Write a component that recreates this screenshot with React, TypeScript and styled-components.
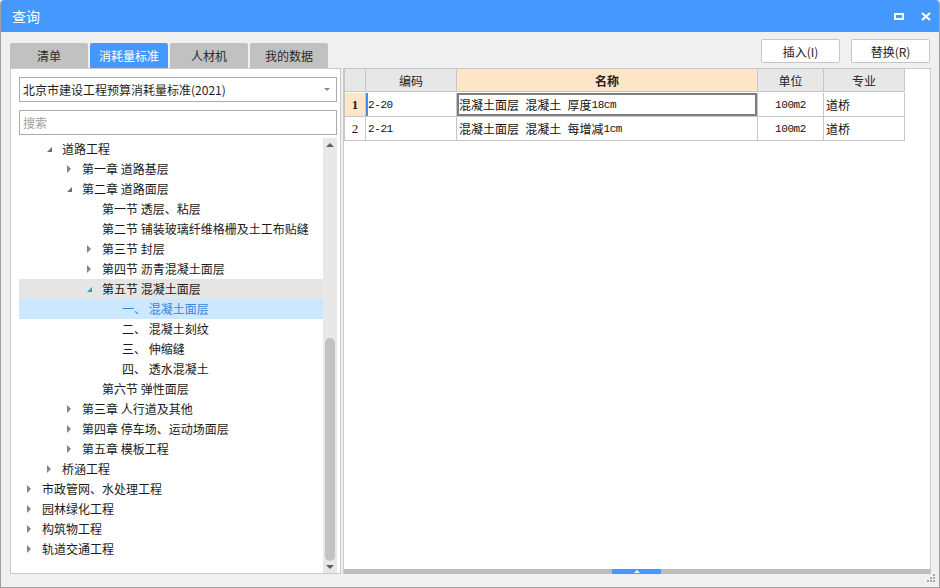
import styled, { createGlobalStyle } from "styled-components";

const GlobalStyle = createGlobalStyle`
  html, body {
    margin: 0;
    padding: 0;
    background: #ffffff;
  }
  body {
    font-family: "Noto Sans CJK SC", "Liberation Sans", sans-serif;
    font-size: 12px;
    color: #1e1e1e;
  }
  * {
    box-sizing: border-box;
  }
`;

const Window = styled.div`
  position: relative;
  width: 940px;
  height: 588px;
  display: flex;
  flex-direction: column;
  background: #f0f0f0;
  border: 1px solid #a2a2a2;
  border-top: none;
  border-radius: 4px 4px 0 0;
  overflow: hidden;
`;

const TitleBar = styled.div`
  height: 32px;
  flex: none;
  display: flex;
  align-items: center;
  justify-content: space-between;
  background: #4599fe;
  color: #ffffff;
  padding: 0 8px 0 11px;
`;

const Title = styled.div`
  font-size: 14px;
  line-height: 32px;
`;

const TitleIcons = styled.div`
  display: flex;
  align-items: center;
  gap: 17px;
  padding-top: 1px;
`;

const MaxIcon = styled.div`
  width: 10px;
  height: 7px;
  border: 2px solid #ffffff;
`;

const Toolbar = styled.div`
  height: 36px;
  flex: none;
  display: flex;
  justify-content: space-between;
  padding: 0 9px 0 9px;
`;

const Tabs = styled.div`
  display: flex;
  align-items: flex-end;
  gap: 2px;
`;

const Tab = styled.div<{ $active?: boolean }>`
  width: 78px;
  height: 25px;
  display: flex;
  align-items: center;
  justify-content: center;
  border-radius: 2px 2px 0 0;
  background: ${(p) => (p.$active ? "#4599fe" : "#c1c1c1")};
  color: ${(p) => (p.$active ? "#ffffff" : "#2a2a2a")};
  font-size: 12px;
`;

const Buttons = styled.div`
  display: flex;
  gap: 11px;
  padding-top: 7px;
`;

const Button = styled.div`
  width: 79px;
  height: 24px;
  display: flex;
  align-items: center;
  justify-content: center;
  background: #ffffff;
  border: 1px solid #c6c6c6;
  border-radius: 2px;
  font-size: 12px;
  color: #222222;
`;

const Panels = styled.div`
  height: 506px;
  flex: none;
  display: flex;
  gap: 2px;
  padding: 0 8px 0 9px;
`;

const LeftPanel = styled.div`
  width: 331px;
  flex: none;
  display: flex;
  flex-direction: column;
  background: #ffffff;
  border: 1px solid #c9c9c9;
  padding: 8px 3px 0 8px;
`;

const Field = styled.div`
  height: 25px;
  flex: none;
  display: flex;
  align-items: center;
  justify-content: space-between;
  border: 1px solid #ababab;
  padding: 0 6px 0 3px;
  font-size: 12px;
  margin-bottom: 8px;
`;

const Placeholder = styled.span`
  color: #a0a0a0;
`;

const DropArrow = styled.div`
  width: 0;
  height: 0;
  border-left: 3px solid transparent;
  border-right: 3px solid transparent;
  border-top: 3px solid #8a8a8a;
`;

const TreeArea = styled.div`
  flex: 1;
  display: flex;
  margin-top: -5px;
  min-height: 0;
`;

const TreeList = styled.div`
  flex: 1;
  padding-top: 1px;
`;

const TreeRow = styled.div<{ $level: number; $hover?: boolean; $selected?: boolean }>`
  height: 20px;
  display: flex;
  align-items: center;
  padding-left: ${(p) => (p.$level - 1) * 20 + 3}px;
  background: ${(p) => (p.$selected ? "#cce8ff" : p.$hover ? "#e5e5e5" : "transparent")};
  color: ${(p) => (p.$selected ? "#3a86dc" : "#1a1a1a")};
  white-space: nowrap;
  line-height: 20px;
`;

const Toggle = styled.div`
  width: 20px;
  height: 20px;
  flex: none;
  display: flex;
  align-items: center;
  padding-left: 5px;
`;

const Closed = styled.div`
  width: 0;
  height: 0;
  border-top: 4px solid transparent;
  border-bottom: 4px solid transparent;
  border-left: 4px solid #858585;
`;

const Open = styled.div<{ $blue?: boolean }>`
  width: 0;
  height: 0;
  margin-top: 1px;
  border-left: 5px solid transparent;
  border-bottom: 5px solid ${(p) => (p.$blue ? "#3d8ee8" : "#6e6e6e")};
`;

const VScroll = styled.div`
  width: 14px;
  flex: none;
  display: flex;
  flex-direction: column;
  align-items: center;
  background: #e8e8e8;
`;

const ScrollEnd = styled.div<{ $h: number }>`
  height: ${(p) => p.$h}px;
  flex: none;
  display: flex;
  align-items: center;
  justify-content: center;
`;

const ArrowUp = styled.div`
  width: 0;
  height: 0;
  border-left: 4px solid transparent;
  border-right: 4px solid transparent;
  border-bottom: 4px solid #606060;
`;

const ArrowDown = styled.div`
  width: 0;
  height: 0;
  border-left: 4px solid transparent;
  border-right: 4px solid transparent;
  border-top: 4px solid #606060;
`;

const Track = styled.div`
  flex: 1;
  display: flex;
  flex-direction: column;
  justify-content: flex-end;
`;

const Thumb = styled.div`
  width: 10px;
  height: 223px;
  border-radius: 5px;
  background: #c3c3c3;
`;

const RightPanel = styled.div`
  flex: 1;
  display: flex;
  flex-direction: column;
  background: #ffffff;
  border: 1px solid #c9c9c9;
  border-bottom: none;
`;

const TableArea = styled.div`
  flex: 1;
`;

const Grid = styled.div`
  display: grid;
  grid-template-columns: 21px 91px 301px 66px 81px;
  grid-auto-rows: 24px;
  width: 560px;
  border-left: 1px solid #c6c6c6;
  & > div:nth-child(-n + 5) {
    height: 23px;
  }
`;

const HeadCell = styled.div<{ $focus?: boolean }>`
  display: flex;
  align-items: center;
  justify-content: center;
  background: ${(p) => (p.$focus ? "#fde6c7" : "#e7e7e7")};
  border-right: 1px solid #c6c6c6;
  border-bottom: 1px solid #c6c6c6;
  font-weight: ${(p) => (p.$focus ? 700 : 400)};
  color: #222222;
`;

const NumCell = styled.div<{ $focus?: boolean }>`
  display: flex;
  align-items: center;
  justify-content: center;
  background: ${(p) => (p.$focus ? "#fde6c7" : "#ffffff")};
  border-right: 1px solid #c6c6c6;
  border-bottom: 1px solid #c6c6c6;
  font-family: "Liberation Serif", serif;
  font-size: 13px;
  font-weight: ${(p) => (p.$focus ? 700 : 400)};
`;

const Cell = styled.div<{ $center?: boolean; $mark?: boolean; $edit?: boolean }>`
  display: flex;
  align-items: center;
  justify-content: ${(p) => (p.$center ? "center" : "flex-start")};
  padding-left: ${(p) => (p.$center ? 0 : 2)}px;
  border-right: 1px solid #c6c6c6;
  border-bottom: 1px solid #c6c6c6;
  white-space: pre;
  color: #111111;
  ${(p) => (p.$mark ? "box-shadow: inset 2px 0 0 #3d8ee8;" : "")}
  ${(p) =>
    p.$edit
      ? "box-shadow: inset 0 0 0 2px #7d7d7d, inset 0 2px 0 #7fb3ec;"
      : ""}
`;

const Mono = styled.span`
  font-family: "Liberation Mono", monospace;
  font-size: 11px;
  letter-spacing: -0.4px;
`;

const HScroll = styled.div`
  height: 5px;
  flex: none;
  display: flex;
  background: #bcbcbc;
  padding-left: 268px;
`;

const HThumb = styled.div`
  width: 49px;
  height: 5px;
  display: flex;
  align-items: center;
  justify-content: center;
  background: #4599fe;
`;

const HThumbArrow = styled.div`
  width: 0;
  height: 0;
  border-left: 3px solid transparent;
  border-right: 3px solid transparent;
  border-bottom: 3px solid #ffffff;
`;

const Grip = styled.svg`
  position: absolute;
  right: 2px;
  bottom: 3px;
`;

type Node = {
  label: string;
  level: number;
  state?: "open" | "closed";
  hover?: boolean;
  selected?: boolean;
};

const treeItems: Node[] = [
  { label: "道路工程", level: 2, state: "open" },
  { label: "第一章 道路基层", level: 3, state: "closed" },
  { label: "第二章 道路面层", level: 3, state: "open" },
  { label: "第一节 透层、粘层", level: 4 },
  { label: "第二节 铺装玻璃纤维格栅及土工布贴缝", level: 4 },
  { label: "第三节 封层", level: 4, state: "closed" },
  { label: "第四节 沥青混凝土面层", level: 4, state: "closed" },
  { label: "第五节 混凝土面层", level: 4, state: "open", hover: true },
  { label: "一、 混凝土面层", level: 5, selected: true },
  { label: "二、 混凝土刻纹", level: 5 },
  { label: "三、 伸缩缝", level: 5 },
  { label: "四、 透水混凝土", level: 5 },
  { label: "第六节 弹性面层", level: 4 },
  { label: "第三章 人行道及其他", level: 3, state: "closed" },
  { label: "第四章 停车场、运动场面层", level: 3, state: "closed" },
  { label: "第五章 模板工程", level: 3, state: "closed" },
  { label: "桥涵工程", level: 2, state: "closed" },
  { label: "市政管网、水处理工程", level: 1, state: "closed" },
  { label: "园林绿化工程", level: 1, state: "closed" },
  { label: "构筑物工程", level: 1, state: "closed" },
  { label: "轨道交通工程", level: 1, state: "closed" },
];

const rows = [
  { no: "1", code: "2-20", parts: ["混凝土面层", "混凝土", "厚度"], size: "18cm", unit: "100m2", major: "道桥" },
  { no: "2", code: "2-21", parts: ["混凝土面层", "混凝土", "每增减"], size: "1cm", unit: "100m2", major: "道桥" },
];

// ascii runs in the grid use a narrow mono face, like the original SimSun digits
function NameText({ parts, size }: { parts: string[]; size: string }) {
  return (
    <>
      {parts.map((p, i) => (
        <span key={p + i}>
          {i > 0 && <Mono> </Mono>}
          {p}
        </span>
      ))}
      <Mono>{size}</Mono>
    </>
  );
}

export default function App() {
  return (
    <>
      <GlobalStyle />
      <Window>
        <TitleBar>
          <Title>查询</Title>
          <TitleIcons>
            <MaxIcon />
            <svg width="10" height="9" viewBox="0 0 10 9">
              <path d="M1 1 L9 8 M9 1 L1 8" stroke="#ffffff" strokeWidth="2.2" />
            </svg>
          </TitleIcons>
        </TitleBar>

        <Toolbar>
          <Tabs>
            <Tab>清单</Tab>
            <Tab $active>消耗量标准</Tab>
            <Tab>人材机</Tab>
            <Tab>我的数据</Tab>
          </Tabs>
          <Buttons>
            <Button>插入(I)</Button>
            <Button>替换(R)</Button>
          </Buttons>
        </Toolbar>

        <Panels>
          <LeftPanel>
            <Field>
              <span>北京市建设工程预算消耗量标准(2021)</span>
              <DropArrow />
            </Field>
            <Field>
              <Placeholder>搜索</Placeholder>
            </Field>
            <TreeArea>
              <TreeList>
                {treeItems.map((item) => (
                  <TreeRow
                    key={item.label}
                    $level={item.level}
                    $hover={item.hover}
                    $selected={item.selected}
                  >
                    <Toggle>
                      {item.state === "closed" && <Closed />}
                      {item.state === "open" && <Open $blue={item.hover} />}
                    </Toggle>
                    {item.label}
                  </TreeRow>
                ))}
              </TreeList>
              <VScroll>
                <ScrollEnd $h={14}>
                  <ArrowUp />
                </ScrollEnd>
                <Track>
                  <Thumb />
                </Track>
                <ScrollEnd $h={12}>
                  <ArrowDown />
                </ScrollEnd>
              </VScroll>
            </TreeArea>
          </LeftPanel>

          <RightPanel>
            <TableArea>
              <Grid>
                <HeadCell />
                <HeadCell>编码</HeadCell>
                <HeadCell $focus>名称</HeadCell>
                <HeadCell>单位</HeadCell>
                <HeadCell>专业</HeadCell>
                {rows.map((r, i) => [
                  <NumCell key={r.no + "n"} $focus={i === 0}>
                    {r.no}
                  </NumCell>,
                  <Cell key={r.no + "c"} $mark={i === 0}>
                    <Mono>{r.code}</Mono>
                  </Cell>,
                  <Cell key={r.no + "m"} $edit={i === 0}>
                    <NameText parts={r.parts} size={r.size} />
                  </Cell>,
                  <Cell key={r.no + "u"} $center>
                    <Mono>{r.unit}</Mono>
                  </Cell>,
                  <Cell key={r.no + "z"}>{r.major}</Cell>,
                ])}
              </Grid>
            </TableArea>
            <HScroll>
              <HThumb>
                <HThumbArrow />
              </HThumb>
            </HScroll>
          </RightPanel>
        </Panels>

        <Grip width="10" height="10" viewBox="0 0 10 10">
          <rect x="6" y="0" width="2" height="2" fill="#a8a8a8" />
          <rect x="3" y="3" width="2" height="2" fill="#a8a8a8" />
          <rect x="6" y="3" width="2" height="2" fill="#a8a8a8" />
          <rect x="0" y="6" width="2" height="2" fill="#a8a8a8" />
          <rect x="3" y="6" width="2" height="2" fill="#a8a8a8" />
          <rect x="6" y="6" width="2" height="2" fill="#a8a8a8" />
        </Grip>
      </Window>
    </>
  );
}
